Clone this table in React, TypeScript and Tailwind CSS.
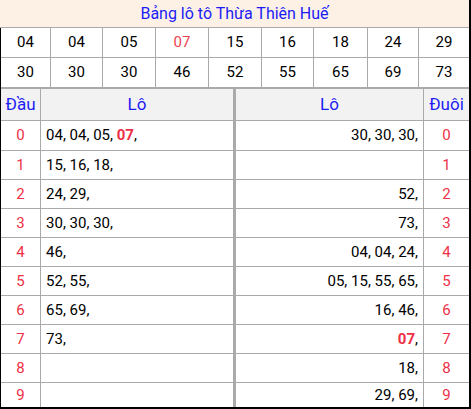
import React from 'react';

const TOP = [
  ['04', '04', '05', '07', '15', '16', '18', '24', '29'],
  ['30', '30', '30', '46', '52', '55', '65', '69', '73'],
];
const COLS = 'grid-cols-[50px_52px_53px_53px_53px_52px_54px_51px_50px]';

const DAU = [
  ['04', '04', '05', '07'],
  ['15', '16', '18'],
  ['24', '29'],
  ['30', '30', '30'],
  ['46'],
  ['52', '55'],
  ['65', '69'],
  ['73'],
  [],
  [],
];
const DUOI = [
  ['30', '30', '30'],
  [],
  ['52'],
  ['73'],
  ['04', '04', '24'],
  ['05', '15', '55', '65'],
  ['16', '46'],
  ['07'],
  ['18'],
  ['29', '69'],
];

const Nums: React.FC<{ list: string[] }> = ({ list }) => (
  <>
    {list.map((n, i) => (
      <React.Fragment key={i}>
        {n === '07' ? <b className="font-bold text-[#ee2f47]">{n}</b> : n}
        {i < list.length - 1 ? ', ' : ','}
      </React.Fragment>
    ))}
  </>
);

export default function App() {
  return (
    <div className="w-[471px] bg-white font-['Roboto',sans-serif] text-[15px] text-black border-r-2 border-b-2 border-black">
      {/* title */}
      <div className="h-[28px] flex items-center justify-center bg-[#fdf1e6] border-b border-[#aaa] text-[16px] text-[#1c1cf5]">
        Bảng lô tô Thừa Thiên Huế
      </div>
      <div className="border-l border-black">
        {TOP.map((row, r) => (
          <div key={r} className={`grid ${COLS} ${r === 0 ? 'h-[30px] border-b' : 'h-[31px] border-b-2'} border-[#aaa]`}>
            {row.map((n, c) => (
              <div key={c} className={`flex items-center justify-center ${c < 8 ? 'border-r border-[#aaa]' : ''} ${n === '07' ? 'text-[#f0414f]' : ''}`}>
                {n}
              </div>
            ))}
          </div>
        ))}

        {/* header */}
        <div className="flex h-[32px] bg-[#f2f2f2] border-b border-[#aaa] text-[17px] text-[#1c1cf5]">
          <div className="w-[40px] flex items-center justify-center border-r border-[#aaa]">Đầu</div>
          <div className="w-[195px] flex items-center justify-center border-r-[3px] border-[#aaa]">Lô</div>
          <div className="w-[188px] flex items-center justify-center border-r border-[#aaa]">Lô</div>
          <div className="flex-1 flex items-center justify-center">Đuôi</div>
        </div>

        {DAU.map((left, i) => (
          <div key={i} className={`flex ${i === 0 ? 'h-[30px]' : i === 9 ? 'h-[24px]' : 'h-[29px]'} ${i < 9 ? 'border-b border-[#aaa]' : ''}`}>
            <div className="w-[40px] flex items-center justify-center border-r border-[#aaa] text-[#ee3048]">{i}</div>
            <div className="w-[195px] flex items-center pl-[5px] border-r-[3px] border-[#aaa]">
              <span><Nums list={left} /></span>
            </div>
            <div className="w-[188px] flex items-center justify-end pr-[5px] border-r border-[#aaa]">
              <span><Nums list={DUOI[i]} /></span>
            </div>
            <div className="flex-1 flex items-center justify-center text-[#ee3048]">{i}</div>
          </div>
        ))}
      </div>
    </div>
  );
}
